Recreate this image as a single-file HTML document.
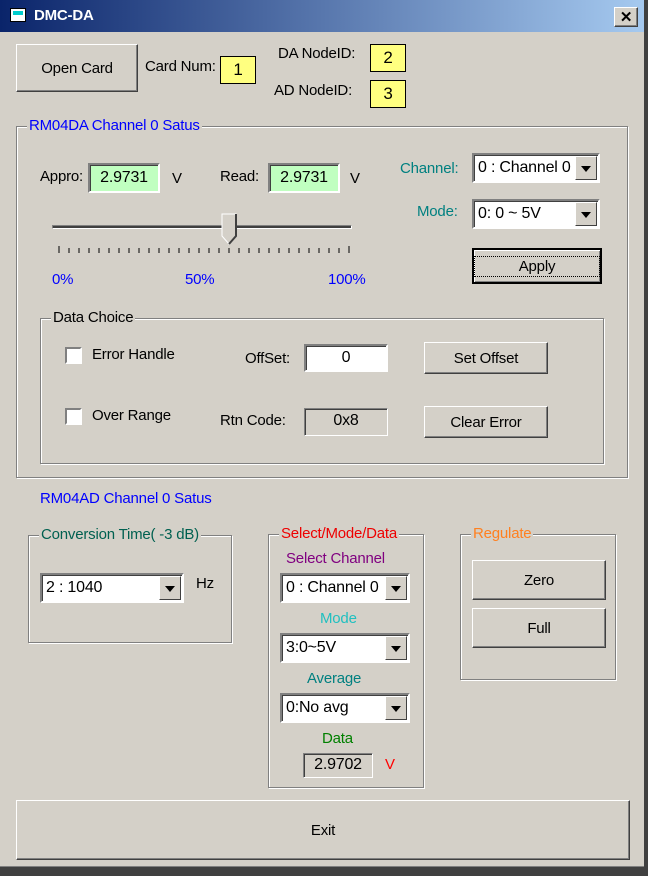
<!DOCTYPE html>
<html><head><meta charset="utf-8"><style>
*{box-sizing:border-box;margin:0;padding:0}
body{width:648px;height:876px;background:#d4d0c8;font-family:"Liberation Sans",sans-serif;font-size:15px;letter-spacing:-0.2px;color:#000;position:relative;overflow:hidden}
.a{position:absolute;white-space:nowrap}
.title{left:0;top:0;width:646px;height:32px;background:linear-gradient(90deg,#0a246a,#a6caf0);color:#fff;font-weight:bold;font-size:15px;line-height:32px;padding-left:34px}
.btn{position:absolute;background:#d4d0c8;border:1px solid;border-color:#fff #404040 #404040 #fff;box-shadow:inset -1px -1px 0 #808080;text-align:center;display:flex;align-items:center;justify-content:center}
.yel{position:absolute;background:#ffff80;border:1px solid #000;text-align:center;font-size:17px}
.sunk{position:absolute;border:2px solid;border-color:#808080 #fff #fff #808080;box-shadow:inset 1px 1px 0 #404040;text-align:center;font-size:16px}
.grp{position:absolute;border:1px solid #808080;box-shadow:1px 1px 0 #fff,inset 1px 1px 0 #fff}
.gl{position:absolute;top:-10px;background:#d4d0c8;padding:0 2px;white-space:nowrap}
.combo{position:absolute;background:#fff;border:2px solid;border-color:#808080 #fff #fff #808080;box-shadow:inset 1px 1px 0 #404040;padding-left:4px;line-height:25px;overflow:hidden;white-space:nowrap;font-size:16px}
.combo i{position:absolute;right:1px;top:1px;bottom:1px;width:22px;background:#d4d0c8;border:1px solid;border-color:#fff #404040 #404040 #fff}
.combo i:after{content:"";position:absolute;left:5px;top:9px;border:5px solid transparent;border-top:6px solid #000;border-bottom:0}
.cb{position:absolute;width:17px;height:17px;background:#fff;border:2px solid;border-color:#808080 #fff #fff #808080}
</style></head><body>
<div class="a title">DMC-DA</div>
<div class="a" style="left:10px;top:8px;width:16px;height:14px;background:#fff;border:1px solid #000"><div style="margin:2px;height:4px;background:#0cc"></div></div>
<div class="btn" style="left:614px;top:7px;width:24px;height:20px;font-weight:bold">✕</div>

<div class="btn" style="left:16px;top:44px;width:122px;height:48px">Open Card</div>
<div class="a" style="left:145px;top:58px">Card Num:</div>
<div class="yel" style="left:220px;top:56px;width:36px;height:28px;line-height:26px">1</div>
<div class="a" style="left:278px;top:45px">DA NodeID:</div>
<div class="yel" style="left:370px;top:44px;width:36px;height:28px;line-height:26px">2</div>
<div class="a" style="left:274px;top:82px">AD NodeID:</div>
<div class="yel" style="left:370px;top:80px;width:36px;height:28px;line-height:26px">3</div>

<div class="grp" style="left:16px;top:126px;width:612px;height:352px"><span class="gl" style="left:10px;color:#00f">RM04DA Channel 0 Satus</span></div>
<div class="a" style="left:40px;top:168px">Appro:</div>
<div class="sunk" style="left:88px;top:163px;width:72px;height:30px;background:#c0ffc0;line-height:25px">2.9731</div>
<div class="a" style="left:172px;top:170px">V</div>
<div class="a" style="left:220px;top:168px">Read:</div>
<div class="sunk" style="left:268px;top:163px;width:72px;height:30px;background:#c0ffc0;line-height:25px">2.9731</div>
<div class="a" style="left:350px;top:170px">V</div>
<div class="a" style="left:52px;top:225px;width:300px;height:4px;border:1px solid;border-color:#808080 #fff #fff #808080;background:#404040"></div>
<svg class="a" style="left:221px;top:213px" width="18" height="34"><path d="M1 1H15V23L8 31L1 23Z" fill="#d4d0c8" stroke="#fff"/><path d="M15 1V23L8 31" fill="none" stroke="#404040" stroke-width="2"/></svg>
<svg class="a" style="left:58px;top:246px" width="300" height="8"><g stroke="#000"><path d="M1 0V7M291 0V7" /><path d="M11 2V7M21 2V7M31 2V7M41 2V7M51 2V7M61 2V7M71 2V7M81 2V7M91 2V7M101 2V7M111 2V7M121 2V7M131 2V7M141 2V7M151 2V7M161 2V7M171 2V7M181 2V7M191 2V7M201 2V7M211 2V7M221 2V7M231 2V7M241 2V7M251 2V7M261 2V7M271 2V7M281 2V7"/></g></svg>
<div class="a" style="left:52px;top:271px;color:#00f">0%</div>
<div class="a" style="left:185px;top:271px;color:#00f">50%</div>
<div class="a" style="left:328px;top:271px;color:#00f">100%</div>
<div class="a" style="left:400px;top:160px;color:#008080">Channel:</div>
<div class="combo" style="left:472px;top:153px;width:128px;height:30px">0 : Channel 0<i></i></div>
<div class="a" style="left:417px;top:203px;color:#008080">Mode:</div>
<div class="combo" style="left:472px;top:199px;width:128px;height:30px">0: 0 ~ 5V<i></i></div>
<div class="btn" style="left:472px;top:248px;width:130px;height:36px;border:2px solid #000;box-shadow:inset 1px 1px 0 #fff,inset -1px -1px 0 #808080"><span style="border:1px dotted #000;padding:1px 44px">Apply</span></div>

<div class="grp" style="left:40px;top:318px;width:564px;height:146px"><span class="gl" style="left:10px">Data Choice</span></div>
<div class="cb" style="left:65px;top:347px"></div>
<div class="a" style="left:92px;top:346px">Error Handle</div>
<div class="cb" style="left:65px;top:408px"></div>
<div class="a" style="left:92px;top:407px">Over Range</div>
<div class="a" style="left:245px;top:350px">OffSet:</div>
<div class="sunk" style="left:304px;top:344px;width:84px;height:28px;background:#fff;line-height:23px">0</div>
<div class="a" style="left:220px;top:412px">Rtn Code:</div>
<div class="sunk" style="left:304px;top:408px;width:84px;height:28px;line-height:24px;border-width:1px">0x8</div>
<div class="btn" style="left:424px;top:342px;width:124px;height:32px">Set Offset</div>
<div class="btn" style="left:424px;top:406px;width:124px;height:32px">Clear Error</div>

<div class="a" style="left:40px;top:490px;color:#00f">RM04AD Channel 0 Satus</div>
<div class="grp" style="left:28px;top:535px;width:204px;height:108px"><span class="gl" style="left:10px;color:#006050">Conversion Time( -3 dB)</span></div>
<div class="combo" style="left:40px;top:573px;width:144px;height:30px">2 : 1040<i></i></div>
<div class="a" style="left:196px;top:575px">Hz</div>

<div class="grp" style="left:268px;top:534px;width:156px;height:254px"><span class="gl" style="left:10px;color:#e00">Select/Mode/Data</span></div>
<div class="a" style="left:286px;top:550px;color:#800080">Select Channel</div>
<div class="combo" style="left:280px;top:573px;width:130px;height:30px">0 : Channel 0<i></i></div>
<div class="a" style="left:320px;top:610px;color:#20c0c0">Mode</div>
<div class="combo" style="left:280px;top:633px;width:130px;height:30px">3:0~5V<i></i></div>
<div class="a" style="left:307px;top:670px;color:#008080">Average</div>
<div class="combo" style="left:280px;top:693px;width:130px;height:30px">0:No avg<i></i></div>
<div class="a" style="left:322px;top:730px;color:#008000">Data</div>
<div class="sunk" style="left:303px;top:753px;width:70px;height:25px;line-height:22px;border-width:1px">2.9702</div>
<div class="a" style="left:385px;top:756px;color:#f00">V</div>

<div class="grp" style="left:460px;top:534px;width:156px;height:146px"><span class="gl" style="left:10px;color:#ff8020">Regulate</span></div>
<div class="btn" style="left:472px;top:560px;width:134px;height:40px">Zero</div>
<div class="btn" style="left:472px;top:608px;width:134px;height:40px">Full</div>

<div class="btn" style="left:16px;top:800px;width:614px;height:60px">Exit</div>
<div class="a" style="left:0;top:866px;width:648px;height:10px;background:#404040;border-top:1px solid #808080"></div>
<div class="a" style="left:644px;top:0;width:4px;height:876px;background:#404040"></div>
</body></html>
